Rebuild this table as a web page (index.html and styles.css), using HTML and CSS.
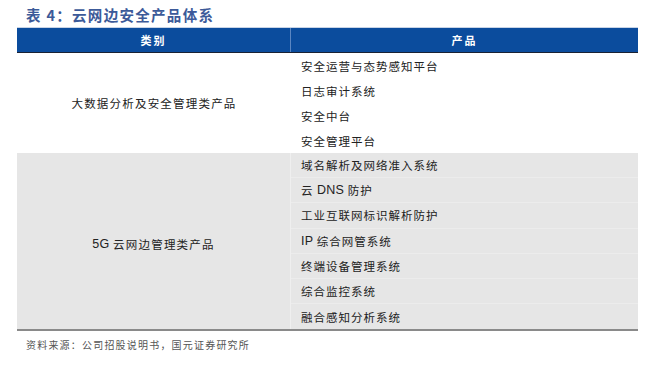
FILE: index.html
```html
<!DOCTYPE html>
<html lang="zh">
<head>
<meta charset="utf-8">
<link rel="stylesheet" href="styles.css">
</head>
<body>
<div class="page">
  <div class="title">表 4：云网边安全产品体系</div>
  <div class="table">
    <div class="head">
      <div class="hcell hleft">类别</div>
      <div class="hcell">产品</div>
    </div>
    <div class="group white">
      <div class="cat">大数据分析及安全管理类产品</div>
      <div class="items">
        <div class="item">安全运营与态势感知平台</div>
        <div class="item">日志审计系统</div>
        <div class="item">安全中台</div>
        <div class="item">安全管理平台</div>
      </div>
    </div>
    <div class="group gray">
      <div class="cat"><span class="lat">5G</span> 云网边管理类产品</div>
      <div class="items">
        <div class="item">域名解析及网络准入系统</div>
        <div class="item">云 <span class="lat">DNS</span> 防护</div>
        <div class="item">工业互联网标识解析防护</div>
        <div class="item"><span class="lat">IP</span> 综合网管系统</div>
        <div class="item">终端设备管理系统</div>
        <div class="item">综合监控系统</div>
        <div class="item">融合感知分析系统</div>
      </div>
    </div>
  </div>
  <div class="source">资料来源：公司招股说明书，国元证券研究所</div>
</div>
</body>
</html>
```

FILE: styles.css
```css
* { box-sizing: border-box; }
html, body { margin: 0; padding: 0; background: #fff; }
body {
  font-family: "Noto Sans CJK SC", "Noto Sans", sans-serif;
  color: #222;
}
.page {
  width: 661px;
  height: 370px;
  display: flex;
  flex-direction: column;
}
.title {
  height: 27px;
  padding-left: 26px;
  padding-top: 5px;
  font-size: 14.5px;
  line-height: 20px;
  font-weight: bold;
  letter-spacing: 1.3px;
  color: #3c5a99;
  white-space: pre;
}
.table {
  margin-left: 17px;
  width: 621px;
  display: flex;
  flex-direction: column;
}
.head {
  display: grid;
  grid-template-columns: 274px 1fr;
  height: 26px;
  background: #0b4c9d;
  border-bottom: 1px solid #1a2233;
  border-top: 1px solid #c8d4e6;
}
.hcell {
  color: #fff;
  font-size: 11px;
  font-weight: bold;
  letter-spacing: 2px;
  display: flex;
  align-items: center;
  justify-content: center;
  padding-bottom: 1px;
}
.hleft { border-right: 1px solid #5b86c2; }
.group {
  display: grid;
  grid-template-columns: 274px 1fr;
}
.white { background: #fff; }
.gray { background: #e6e6e6; border-bottom: 2px solid #8a8a8a; }
.cat {
  display: flex;
  align-items: center;
  justify-content: center;
  font-size: 11.5px;
  letter-spacing: 1.2px;
  color: #222;
  white-space: pre;
}
.gray .cat { border-right: 1px solid #efefef; padding-top: 6px; }
.items { display: flex; flex-direction: column; }
.item {
  height: 25px;
  display: flex;
  align-items: center;
  padding-left: 10px;
  font-size: 11.5px;
  letter-spacing: 1px;
  color: #222;
  white-space: pre;
}
.gray .item { border-bottom: 1px solid #ececec; height: 25.2px; }
.gray .item:last-child { border-bottom: none; }
.lat {
  font-family: "Liberation Sans", Arial, sans-serif;
  font-size: 12.5px;
  letter-spacing: 0.2px;
}
.source {
  padding-left: 26px;
  padding-top: 7px;
  font-size: 10px;
  line-height: 14px;
  letter-spacing: 1.2px;
  color: #555;
}
```
